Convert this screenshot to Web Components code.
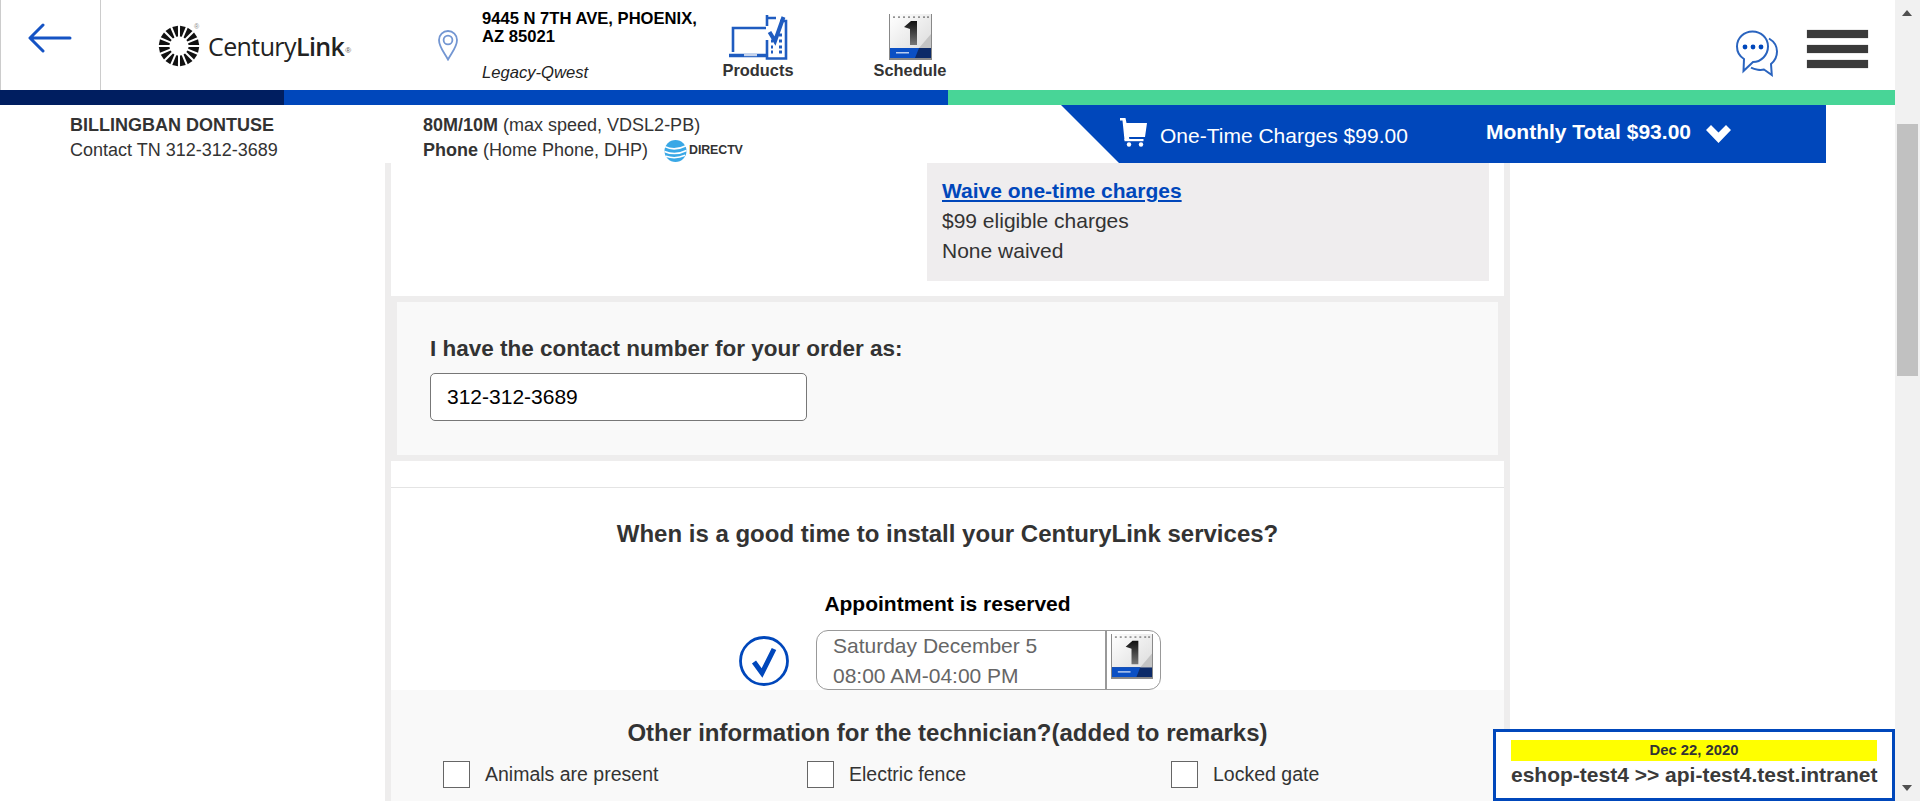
<!DOCTYPE html>
<html lang="en">
<head>
<meta charset="utf-8">
<title>Order</title>
<style>
  html, body { margin: 0; height: 801px; overflow: hidden; background: #fff; font-family: "Liberation Sans", Arial, sans-serif; color: #333; }
</style>
</head>
<body>
<app-shell>
  <top-bar></top-bar>
  <step-bar></step-bar>
  <order-summary></order-summary>
  <order-page>
    <charges-row></charges-row>
    <contact-card></contact-card>
    <schedule-card></schedule-card>
    <tech-info>
      <check-option>Animals are present</check-option>
      <check-option>Electric fence</check-option>
      <check-option>Locked gate</check-option>
    </tech-info>
  </order-page>
</app-shell>
<env-badge></env-badge>

<script>
// little helper, every element is just css + markup in an open shadow root
function component(tag, css, html) {
  const tpl = document.createElement("template");
  tpl.innerHTML = `<style>${css}</style>${html}`;
  customElements.define(tag, class extends HTMLElement {
    constructor() {
      super();
      this.attachShadow({mode: "open"}).appendChild(tpl.content.cloneNode(true));
    }
  });
}

const BLUE = "#0047bb";

// sunburst for the logo
let rays = "";
for (let i = 0; i < 16; i++) {
  const r = i * 22.5 + 11.25;
  rays += `<polygon points="-0.9,-9.5 0.9,-9.5 2.9,-20 -2.9,-20" transform="rotate(${r})"/>`;
}

component("cal-icon", `
  :host { display: block; width: 43px; height: 46px; }
  svg { display: block; width: 100%; height: 100%; }
`, `
  <svg viewBox="0 0 43 46">
    <defs>
      <linearGradient id="pg" x1="0" y1="0" x2="1" y2="1"><stop offset="0" stop-color="#fff"/><stop offset="1" stop-color="#dcdcdc"/></linearGradient>
      <linearGradient id="one" x1="0" y1="0" x2="0" y2="1"><stop offset="0" stop-color="#111"/><stop offset="1" stop-color="#777"/></linearGradient>
    </defs>
    <rect x="0" y="0" width="43" height="46" fill="#888"/>
    <rect x="1" y="0" width="41" height="36" fill="url(#pg)"/>
    <g fill="#666"><rect x="4" y="2.500" width="2" height="1.200"/><rect x="9" y="2.500" width="2" height="1.200"/><rect x="14" y="2.500" width="2" height="1.200"/><rect x="19" y="2.500" width="2" height="1.200"/><rect x="24" y="2.500" width="2" height="1.200"/><rect x="29" y="2.500" width="2" height="1.200"/><rect x="34" y="2.500" width="2" height="1.200"/><rect x="38" y="2.500" width="2" height="1.200"/></g>
    <path d="M15 13 L22 7 H28 V31 H21 V15 Z" fill="url(#one)"/>
    <rect x="1" y="34" width="41" height="10" fill="#0c2a68"/>
    <path d="M1 34 H30 L26 44 H1 Z" fill="#0a4fc4"/>
    <path d="M42 20 V34 H30 Z" fill="#c4c4c4"/>
    <rect x="7" y="38" width="13" height="1.500" fill="#b9cdf0"/>
  </svg>
`);

component("top-bar", `
  :host { display: flex; height: 90px; background: #fff; padding-right: 27px; box-sizing: border-box; }
  .back { width: 101px; box-sizing: border-box; border-left: 1px solid #ccc; border-right: 1px solid #ccc; display: flex; padding: 23px 0 0 27px; flex: none; }
  .logo { width: 337px; flex: none; box-sizing: border-box; padding: 25px 0 0 57px; display: flex; align-items: flex-start; position: relative; }
  .word { font: 400 25px/42px "Open Sans", sans-serif; color: #222; margin-left: 8px; letter-spacing: -0.6px; white-space: nowrap; }
  .word b { font-weight: 600; }
  .word i { font: 400 8px/8px "Liberation Sans", sans-serif; color: #555; vertical-align: 3px; margin-left: 1px; }
  .mark { position: absolute; left: 93px; top: 23px; font-size: 7px; line-height: 7px; color: #888; }
  .pin { width: 44px; flex: none; padding-top: 30px; }
  .addr { width: 240px; flex: none; padding-top: 10px; font-size: 16.6px; line-height: 18px; color: #000; box-sizing: border-box; }
  .addr b { display: block; width: 232px; }
  .addr i { display: block; margin-top: 18px; color: #222; }
  .nav { width: 72px; flex: none; display: flex; flex-direction: column; align-items: center; padding-top: 14px; font-size: 16.4px; font-weight: 700; line-height: 18px; color: #333; white-space: nowrap; }
  .nav.sched { margin-left: 80px; }
  .nav svg, .nav cal-icon { margin-bottom: 1px; }
  .right { margin-left: auto; display: flex; }
  .chat { margin: 30px 28px 0 0; }
  .menu { width: 61px; padding-top: 30px; display: flex; flex-direction: column; gap: 7px; }
  .menu span { display: block; height: 8px; background: #3a3a3a; box-shadow: 0 0 1px #888; }
`, `
  <div class="back">
    <svg width="44" height="30" viewBox="0 0 44 30" fill="none" stroke="#1553c4" stroke-width="3" stroke-linecap="round" stroke-linejoin="round"><path d="M42 15H3M15 2 2 15l13 13"/></svg>
  </div>
  <div class="logo">
    <svg width="42" height="42" viewBox="-21 -21 42 42" fill="#111">${rays}</svg>
    <span class="mark">®</span>
    <span class="word">Century<b>Link</b><i>®</i></span>
  </div>
  <div class="pin">
    <svg width="20" height="31" viewBox="0 0 20 31" fill="none" stroke="#7396d2" stroke-width="1.8"><path d="M10 29.500C6 22 1 17 1 10a9 9 0 0 1 18 0c0 7-5 12-9 19.500Z"/><circle cx="10" cy="10" r="4.400"/></svg>
  </div>
  <div class="addr"><b>9445 N 7TH AVE, PHOENIX, AZ 85021</b><i>Legacy-Qwest</i></div>
  <div class="nav">
    <svg width="60" height="46" viewBox="0 0 60 46" fill="none" stroke="#1f5cc0" stroke-width="2.600">
      <path d="M38 14H5V38"/>
      <path d="M1 41.500H39" stroke-width="3.400"/>
      <path d="M16 41H29" stroke="#c4d2ec" stroke-width="2.400"/>
      <path d="M39 1V12M39 4H48M52 7H58V44.500H39V26"/>
      <path d="M41.500 18 47 27 55.500 3" stroke-width="4"/>
      <path d="M51 21h3M51 27h3M51 33h3M51 38h3M43 27h2M43 33h2M43 38h2" stroke-width="2.800"/>
    </svg>
    Products
  </div>
  <div class="nav sched"><cal-icon></cal-icon>Schedule</div>
  <div class="right">
    <svg class="chat" width="43" height="47" viewBox="0 0 43 47" fill="none" stroke="#2a64bf" stroke-width="2">
      <path d="M33 8.500c5 3 8 7.500 8 13 0 6-3 10-6 12.500l.8 11L28 39.500c-3 .8-9 .4-13-1.800"/>
      <path d="M16.500 1.500C8 1.500 1 8 1 16.500c0 5.500 3 10 7 12.500L7.500 41 17 32c8 0 15-7 15-15.500S25 1.500 16.500 1.500Z" fill="#fff"/>
      <g fill="${BLUE}" stroke="none"><circle cx="9" cy="17" r="2.400"/><circle cx="17" cy="17" r="2.400"/><circle cx="25" cy="17" r="2.400"/></g>
    </svg>
    <div class="menu"><span></span><span></span><span></span></div>
  </div>
`);

component("step-bar", `
  :host { display: flex; height: 15px; }
  .a { width: 284px; background: #001e60; }
  .b { width: 664px; background: ${BLUE}; }
  .c { flex: 1; background: #48d597; }
`, `<div class="a"></div><div class="b"></div><div class="c"></div>`);

component("order-summary", `
  :host { display: flex; height: 58px; padding-left: 70px; font-size: 18px; line-height: 25px; background: #fff; position: relative; z-index: 1; }
  .who { width: 353px; flex: none; padding-top: 8px; }
  .svc { width: 638px; flex: none; padding-top: 8px; white-space: nowrap; }
  .tv { display: inline-flex; align-items: center; vertical-align: top; margin-left: 16px; height: 25px; }
  .tv b { font-size: 12.4px; letter-spacing: -0.1px; color: #333; margin-left: 2px; }
  .tv svg { flex: none; }
  .cart { width: 765px; flex: none; height: 58px; background: ${BLUE}; color: #fff; font-size: 21px; display: flex; clip-path: polygon(0 0, 100% 0, 100% 100%, 58px 100%); box-sizing: border-box; padding-left: 59px; }
  .cart svg { flex: none; }
  .once { margin-left: 13px; padding-top: 18px; white-space: nowrap; width: 326px; flex: none; }
  .month { font-weight: 700; padding-top: 14px; white-space: nowrap; }
  .chev { margin: 20px 0 0 15px; }
`, `
  <div class="who"><b>BILLINGBAN DONTUSE</b><br>Contact TN 312-312-3689</div>
  <div class="svc"><b>80M/10M</b> (max speed, VDSL2-PB)<br><b>Phone</b> (Home Phone, DHP)<span class="tv">
    <svg width="23" height="24" viewBox="0 0 24 25"><circle cx="12" cy="12.500" r="11.500" fill="#3aa8e6"/><path d="M1 8c6 3 14 3 22-1M.5 13c7 3 15 3 23-1M2 18c6 2 13 2 20-1" stroke="#fff" stroke-width="1.600" fill="none"/></svg>
    <b>DIRECTV</b></span></div>
  <div class="cart">
    <svg width="27" height="29" viewBox="0 0 27 29" style="margin-top:13px" fill="#fff"><path d="M0 0h5.500l1 5H27l-2 14H9L9.500 22H4.500L2.500 2.500H0Z"/><circle cx="9" cy="26.500" r="2.200"/><circle cx="21" cy="26.500" r="2.200"/><rect x="4.500" y="21" width="19" height="2.200"/></svg>
    <span class="once">One-Time Charges $99.00</span>
    <span class="month">Monthly Total $93.00</span>
    <svg class="chev" width="25" height="18" viewBox="0 0 25 18" fill="#fff"><path d="M0 5 5 0l7.500 7.500L20 0l5 5-12.500 13Z"/></svg>
  </div>
`);

component("order-page", `
  :host { display: block; width: 1125px; margin-left: 385px; box-sizing: border-box; border-left: 6px solid #eeeded; border-right: 6px solid #eeeded; height: 638px; overflow: hidden; }
`, `<slot></slot>`);

component("charges-row", `
  :host { display: flex; justify-content: flex-end; height: 133px; padding-right: 15px; background: #fff; }
  .box { width: 562px; height: 118px; box-sizing: border-box; background: #efedee; padding: 13px 15px; font-size: 21px; line-height: 30px; }
  a { display: block; color: ${BLUE}; font-weight: 700; text-decoration: underline; }
`, `<div class="box"><a href="#">Waive one-time charges</a>$99 eligible charges<br>None waived</div>`);

component("contact-card", `
  :host { display: block; background: #eeeded; padding: 6px; }
  .in { height: 153px; box-sizing: border-box; background: #f9f9f9; padding: 33px 33px 0; }
  label { display: block; font-size: 22.5px; font-weight: 700; line-height: 28px; }
  .field { width: 377px; height: 48px; box-sizing: border-box; margin-top: 10px; background: #fff; border: 1px solid #777; border-radius: 5px; padding-left: 16px; font-size: 21px; line-height: 46px; color: #000; }
`, `<div class="in"><label>I have the contact number for your order as:</label><div class="field">312-312-3689</div></div>`);

component("schedule-card", `
  :host { display: block; height: 229px; box-sizing: border-box; background: #fff; padding-top: 26px; text-align: center; }
  hr { margin: 0; border: 0; height: 1px; background: #e4e4e4; }
  h2 { margin: 31px 0 0; font-size: 24px; line-height: 30px; font-weight: 700; }
  h3 { margin: 41px 0 0; font-size: 21px; line-height: 28px; font-weight: 700; color: #000; }
  .row { display: flex; margin-top: 12px; padding-left: 348px; text-align: left; }
  .row svg { margin: 6px 27px 0 0; flex: none; }
  .date { width: 345px; height: 60px; box-sizing: border-box; border: 1px solid #999; border-radius: 12px; display: flex; font-size: 21px; line-height: 30px; color: #666; overflow: hidden; }
  .txt { width: 288px; flex: none; padding-left: 16px; box-sizing: border-box; }
  .ico { flex: 1; border-left: 2px solid #999; padding: 2px 0 0 4px; }
  cal-icon { width: 42px; height: 47px; }
`, `
  <hr>
  <h2>When is a good time to install your CenturyLink services?</h2>
  <h3>Appointment is reserved</h3>
  <div class="row">
    <svg width="50" height="50" viewBox="0 0 50 50" fill="none" stroke="${BLUE}"><circle cx="25" cy="25" r="23.500" stroke-width="2.800"/><path d="M15 26l8 11L35 13" stroke-width="5"/></svg>
    <div class="date"><div class="txt">Saturday December 5<br>08:00 AM-04:00 PM</div><div class="ico"><cal-icon></cal-icon></div></div>
  </div>
`);

component("tech-info", `
  :host { display: block; height: 111px; box-sizing: border-box; background: #f9f9f9; padding-top: 29px; }
  h2 { margin: 0; text-align: center; font-size: 24px; line-height: 28px; font-weight: 700; }
  .opts { display: grid; grid-template-columns: repeat(3, 364px); padding-left: 52px; margin-top: 14px; }
`, `<h2>Other information for the technician?(added to remarks)</h2><div class="opts"><slot></slot></div>`);

component("check-option", `
  :host { display: flex; align-items: center; font-size: 19.5px; gap: 15px; color: #333; }
  .box { width: 27px; height: 27px; box-sizing: border-box; border: 1px solid #666; background: #fff; flex: none; }
`, `<span class="box"></span><slot></slot>`);

component("env-badge", `
  :host { position: fixed; right: 25px; bottom: 0; width: 402px; height: 72px; box-sizing: border-box; background: #fff; border: 3px solid ${BLUE}; padding: 8px 15px 0; font-weight: 700; color: #3a3a3a; z-index: 5; }
  .date { height: 21px; background: #ff0; font-size: 14.8px; line-height: 21px; text-align: center; color: #333; }
  .host { font-size: 21px; line-height: 30px; margin-top: -1px; white-space: nowrap; }
`, `<div class="date">Dec 22, 2020</div><div class="host">eshop-test4 &gt;&gt; api-test4.test.intranet</div>`);

component("fake-scrollbar", `
  :host { display: block; position: relative; width: 25px; height: 801px; background: #f1f1f1; flex: none; }
  .thumb { position: absolute; left: 2px; right: 2px; top: 124px; height: 252px; background: #c1c1c1; }
  .up, .down { position: absolute; left: 7px; width: 0; height: 0; border-left: 5.500px solid transparent; border-right: 5.500px solid transparent; }
  .up { top: 10px; border-bottom: 6px solid #505050; }
  .down { bottom: 10px; border-top: 6px solid #505050; }
`, `<div class="up"></div><div class="thumb"></div><div class="down"></div>`);

component("app-shell", `
  :host { display: flex; height: 801px; overflow: hidden; }
  main { width: 1895px; flex: none; display: flex; flex-direction: column; }
`, `<main><slot></slot></main><fake-scrollbar></fake-scrollbar>`);
</script>
</body>
</html>
